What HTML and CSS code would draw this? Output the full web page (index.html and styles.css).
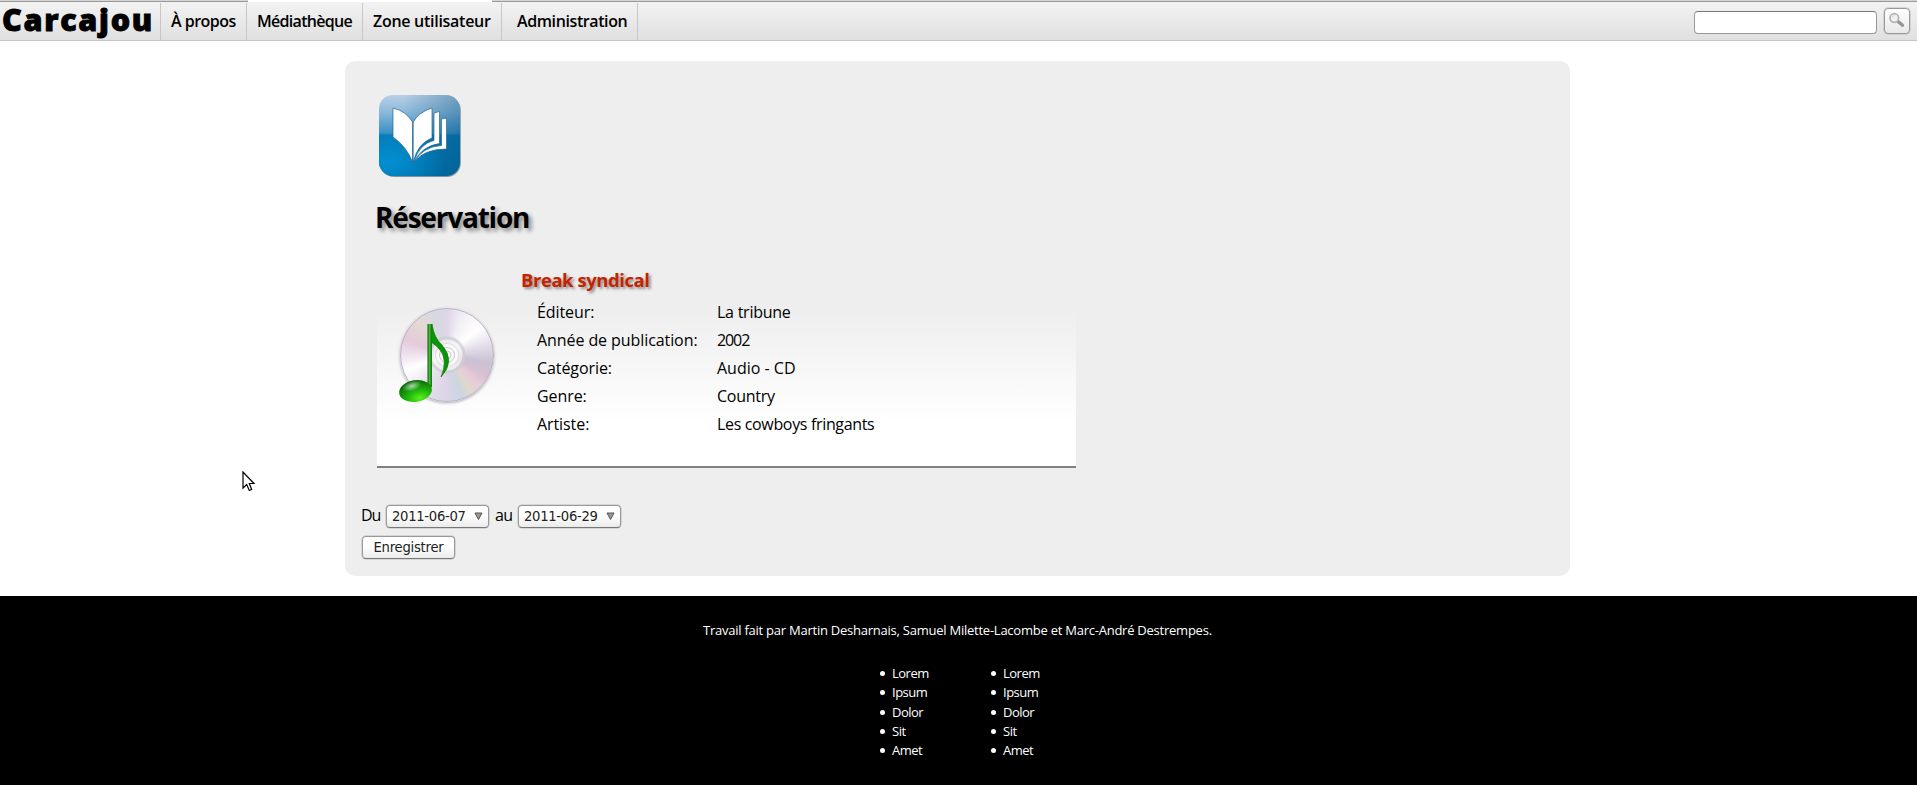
FILE: index.html
```
<!DOCTYPE html>
<html lang="fr">
<head>
<meta charset="utf-8">
<title>Carcajou - Réservation</title>
<link rel="stylesheet" href="styles.css">
</head>
<body>
<div class="strip"><i></i><i></i></div>
<header class="topbar">
  <div class="logo"><span>Carcajou</span></div>
  <nav class="menu">
    <a class="m-about">À propos</a><a class="m-media">Médiathèque</a><a class="m-user">Zone utilisateur</a><a class="m-admin">Administration</a>
  </nav>
  <form class="search">
    <input type="text" aria-label="Recherche">
    <button type="button" class="search-btn" aria-label="Rechercher">
      <svg width="18" height="18" viewBox="0 0 18 18">
        <path d="M9.500 9L14.500 13.200" stroke="#969696" stroke-width="3.400" stroke-linecap="round"/>
        <circle cx="6.300" cy="6" r="4.300" fill="#f2f2f2" stroke="#b5b5b5" stroke-width="1.800"/>
        <path d="M3.800 5.800A2.600 2.600 0 0 1 6.300 3.500" fill="none" stroke="#d8d8d8"/>
      </svg>
    </button>
  </form>
</header>

<main class="panel">
  <svg class="book" width="83" height="84" viewBox="0 0 83 84">
    <defs>
      <linearGradient id="bk" x1="0" y1="0" x2="0" y2="1"><stop offset="0" stop-color="#b9cfe5"/><stop offset=".2" stop-color="#8ebadc"/><stop offset=".47" stop-color="#3a90c5"/><stop offset=".5" stop-color="#0878b5"/><stop offset="1" stop-color="#0070a8"/></linearGradient>
      <radialGradient id="glow" cx=".12" cy=".7" r=".7"><stop offset="0" stop-color="#0290d2"/><stop offset="1" stop-color="#0290d2" stop-opacity="0"/></radialGradient>
      <linearGradient id="dk" x1="0" y1="0" x2="1" y2="0"><stop offset=".3" stop-color="#004f7c" stop-opacity="0"/><stop offset="1" stop-color="#004f7c" stop-opacity=".38"/></linearGradient>
    </defs>
    <rect x="1.300" y="1.500" width="80.500" height="80.500" rx="14" fill="#667380" opacity=".75"/>
    <rect x="0" y="0" width="81" height="81" rx="14" fill="url(#bk)"/>
    <rect x="0" y="0" width="81" height="81" rx="14" fill="url(#dk)"/>
    <path d="M0 37.500Q32 46 81 33V67a14 14 0 0 1-14 14h-53a14 14 0 0 1-14-14z" fill="url(#glow)"/>
    <g fill="#fff" stroke="#27698f" stroke-width=".7">
      <path d="M14 13Q27 16 33.500 27V67Q28 52 14 42z"/>
      <path d="M34.200 27Q40 17 53 13V43Q39 48 34.200 67z"/>
      <path d="M55 18L60.500 16.500V48.500Q43 51 35 67Q40 49 55 45.500z"/>
      <path d="M62.500 24L67.500 23V54Q45 54 35.500 67Q43 52 62.500 50.500z"/>
    </g>
  </svg>
  <h1>Réservation</h1>
  <section class="item">
    <div class="cover">
      <div class="disc"></div>
      <svg class="note" width="110" height="110" viewBox="0 0 110 110">
        <defs>
          <radialGradient id="hd" cx=".6" cy=".85" r=".85"><stop offset="0" stop-color="#55f31c"/><stop offset=".45" stop-color="#1fb40b"/><stop offset="1" stop-color="#086205"/></radialGradient>
          <radialGradient id="shine"><stop offset="0" stop-color="#fff" stop-opacity=".65"/><stop offset="1" stop-color="#fff" stop-opacity="0"/></radialGradient>
          <linearGradient id="st" x1="0" y1="0" x2="1" y2="0"><stop offset="0" stop-color="#075d05"/><stop offset=".45" stop-color="#47b83b"/><stop offset="1" stop-color="#06730a"/></linearGradient>
        </defs>
        <g fill="none" stroke="#c9c9cc"><circle cx="57" cy="55" r="17" stroke="#cfcdd2" stroke-width="3" fill="#f4f4f5" opacity=".75"/><circle cx="57" cy="55" r="11.500" fill="#fafafa" stroke="#ddd"/><circle cx="57" cy="55" r="7.500"/><circle cx="57" cy="55" r="4" fill="#fff"/></g>
        <path d="M42 24Q44 38 52 45Q66 61 51 77Q58 60 50 50Q46 45 41 42z" fill="#0a9408" stroke="#087407" stroke-width=".6"/>
        <path d="M37.500 24H42V87H37.500z" fill="url(#st)"/>
        <ellipse cx="25.500" cy="91" rx="16.500" ry="10.800" transform="rotate(-9 25.500 91)" fill="url(#hd)"/>
        <ellipse cx="22" cy="86" rx="10" ry="5" transform="rotate(-18 22 86)" fill="url(#shine)"/>
      </svg>
    </div>
    <div class="info">
      <h2>Break syndical</h2>
      <dl>
        <dt>Éditeur:</dt><dd>La tribune</dd>
        <dt>Année de publication:</dt><dd class="year">2002</dd>
        <dt>Catégorie:</dt><dd class="cat">Audio - CD</dd>
        <dt>Genre:</dt><dd>Country</dd>
        <dt>Artiste:</dt><dd class="artist">Les cowboys fringants</dd>
      </dl>
    </div>
  </section>
  <form class="booking">
    <div class="dates">
      <span class="du">Du</span>
      <button type="button" class="ctl pick"><span>2011-06-07</span><svg width="9" height="9" viewBox="0 0 9 9"><path d="M1 1H8L4.500 7.500z" fill="#999" stroke="#555"/></svg></button>
      <span class="au">au</span>
      <button type="button" class="ctl pick"><span>2011-06-29</span><svg width="9" height="9" viewBox="0 0 9 9"><path d="M1 1H8L4.500 7.500z" fill="#999" stroke="#555"/></svg></button>
    </div>
    <button type="button" class="ctl save">Enregistrer</button>
  </form>
</main>

<footer class="foot">
  <p>Travail fait par Martin Desharnais, Samuel Milette-Lacombe et Marc-André Destrempes.</p>
  <div class="lists">
    <ul><li>Lorem</li><li>Ipsum</li><li>Dolor</li><li>Sit</li><li>Amet</li></ul>
    <ul><li>Lorem</li><li>Ipsum</li><li>Dolor</li><li>Sit</li><li>Amet</li></ul>
  </div>
</footer>

<svg class="cursor" width="14" height="22" viewBox="0 0 14 22"><path d="M1 1V17L4.700 13.500L7.300 19.500L9.700 18.400L7.300 12.500H12z" fill="#fff" stroke="#000" stroke-width="1.200"/></svg>
</body>
</html>
```

FILE: styles.css
```
* { box-sizing: border-box; }
body {
  margin: 0;
  background: #fff;
  color: #000;
  font: 16px/28px "Open Sans", "Noto Sans", sans-serif;
}
h1, h2, p, dl, dd, ul { margin: 0; padding: 0; }

.strip { display: flex; justify-content: space-between; height: 2px; }
.strip i { background: #d6d6d6; border-bottom: 1px solid #999; width: 248px; }
.strip i + i { width: 1425px; }

.topbar {
  display: flex;
  height: 39px;
  background: linear-gradient(#f3f3f3, #e0e0e0);
  border-bottom: 1px solid #c6c6c6;
}
.logo {
  width: 161px;
  height: 37px;
  margin-top: 1px;
  padding-left: 2px;
  border-right: 1px solid #c6c6c6;
  font-size: 30.500px;
  font-weight: 800;
  line-height: 32px;
  letter-spacing: 1.700px;
  -webkit-text-stroke: .9px #000;
}
.menu { display: flex; margin-top: 1px; }
.menu a {
  height: 37px;
  border-right: 1px solid #c6c6c6;
  padding-left: 10px;
  line-height: 36px;
  font-weight: 600;
  white-space: nowrap;
}
.m-about { width: 86px; letter-spacing: -.5px; }
.m-media { width: 116px; letter-spacing: -.7px; }
.m-user { width: 139px; letter-spacing: -.28px; }
.menu .m-admin { width: 136px; padding-left: 15px; letter-spacing: -.4px; }

.search { display: flex; margin-left: auto; padding: 6px 7px 0 0; gap: 7px; }
.search input {
  width: 183px;
  height: 23px;
  margin-top: 3px;
  background: #fff;
  border: 1px solid #999;
  border-top-color: #777;
  border-radius: 4px;
}
.search-btn {
  width: 26px;
  height: 26px;
  padding: 3px;
  line-height: 0;
  background: linear-gradient(#fff, #e8e8e8);
  border: 1px solid #999;
  border-radius: 4px;
  box-shadow: 0 0 0 .5px #bbb;
}

.panel {
  width: 1225px;
  height: 515px;
  margin: 20px 0 20px 345px;
  padding: 34px 0 0 32px;
  background: #eee;
  border-radius: 10px;
}
.book { display: block; margin-left: 2px; }
h1 {
  margin: 18px 0 0 -2px;
  font-size: 28px;
  line-height: 40px;
  font-weight: 700;
  letter-spacing: -1.200px;
  text-shadow: 3px 3px 4px #888;
}
.item {
  display: flex;
  width: 699px;
  height: 200px;
  margin-top: 31px;
  border-bottom: 2px solid #808080;
  background: linear-gradient(#eee 40px, #fff 155px);
}
.cover { width: 144px; padding: 32px 0 0 13px; display: grid; }
.cover > * { grid-area: 1 / 1; }
.disc {
  width: 94px;
  height: 94px;
  margin: 8px 0 0 10px;
  border: 1px solid #bdb0cb;
  border-radius: 50%;
  background: conic-gradient(#ded5e8 0deg, #f1edf5 20deg, #fff 50deg, #e4dfea 75deg, #cbc2d5 100deg, #d8bfd2 118deg, #e7cbdc 132deg, #ded9cc 147deg, #ccd5e0 160deg, #ded5e8 185deg, #e9e4ef 220deg, #fff 250deg, #eee3ee 270deg, #e5cadb 290deg, #e4d9d2 320deg, #d5dae2 340deg, #ded5e8 360deg);
  box-shadow: 0 1px 3px #aaa;
}
h2 {
  font-size: 18.500px;
  line-height: 24px;
  letter-spacing: -.46px;
  color: #c52200;
  text-shadow: 2px 2px 3px #888;
}
dl {
  display: grid;
  grid-template-columns: 180px auto;
  margin: 6px 0 0 16px;
  white-space: nowrap;
}
dt { letter-spacing: -.08px; }
dd { letter-spacing: -.25px; }
.year { letter-spacing: -1.100px; }
.cat { letter-spacing: 0; }
.artist { letter-spacing: -.34px; }

.booking { margin: 37px 0 0 -16px; }
.dates { display: flex; height: 23px; line-height: 20px; }
.du { width: 25px; letter-spacing: -1.200px; }
.au { width: 29px; padding-left: 6px; letter-spacing: -.7px; }
.ctl {
  height: 23px;
  padding: 0;
  font: 13.200px/19px "DejaVu Sans", sans-serif;
  color: #222;
  background: linear-gradient(#fff 45%, #ebebeb);
  border: 1px solid #999;
  border-bottom-color: #777;
  border-radius: 4px;
  box-shadow: 0 0 0 .5px #bbb;
}
.pick {
  display: flex;
  align-items: center;
  justify-content: space-between;
  width: 103px;
  padding: 0 5px;
  letter-spacing: -.3px;
}
.save { display: block; width: 93px; margin: 8px 0 0 1px; letter-spacing: -.25px; }

.foot {
  height: 189px;
  padding-top: 24px;
  background: #000;
  color: #fff;
  font-size: 13px;
}
.foot p {
  padding-left: 703px;
  line-height: 20px;
  letter-spacing: -.24px;
  white-space: nowrap;
}
.lists { display: flex; padding: 24px 0 0 893px; line-height: 19.250px; letter-spacing: -.5px; }
.lists ul { width: 111px; list-style: none; }
.lists li { display: flex; align-items: center; margin-left: -13px; gap: 7px; }
.lists li::before { content: ""; width: 5px; height: 5px; border-radius: 50%; background: #fff; }

.cursor { position: absolute; left: 242px; top: 471px; }
```
